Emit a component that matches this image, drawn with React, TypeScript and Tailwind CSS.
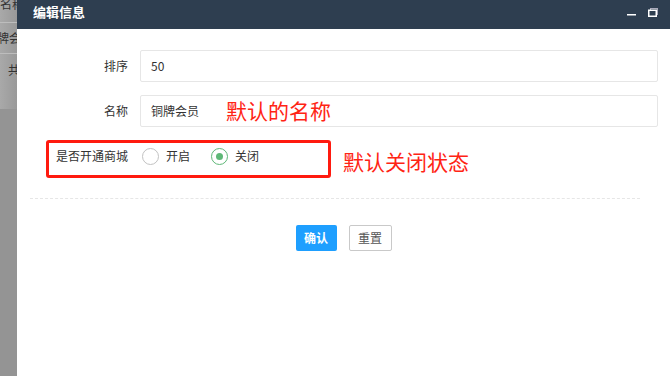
import React from 'react';

const font = { fontFamily: '"Noto Sans CJK SC", "Noto Sans", sans-serif' };

const Radio: React.FC<{ checked?: boolean; label: string }> = ({ checked, label }) => (
  <div className="flex items-center">
    <span
      className={`flex h-[17px] w-[17px] items-center justify-center rounded-full border ${
        checked ? 'border-[#5fb878]' : 'border-[#c2c2c2]'
      }`}
    >
      {checked && <span className="h-[7px] w-[7px] rounded-full bg-[#5fb878]" />}
    </span>
    <span className="ml-[7px] text-[12px] text-[#333]">{label}</span>
  </div>
);

export default function App() {
  return (
    <div className="flex h-[376px] w-[670px] overflow-hidden bg-white" style={font}>
      {/* dimmed page behind the dialog */}
      <div className="relative w-[17px] shrink-0 overflow-hidden bg-gradient-to-r from-[#a9a9a9] to-[#999]">
        <div className="absolute left-0 top-[-5px] whitespace-nowrap text-[12px] text-[#333]">名称</div>
        <div className="absolute left-0 top-[22px] h-px w-full bg-[#bdbdbd]" />
        <div className="absolute left-[-3px] top-[29px] whitespace-nowrap text-[12px] text-[#333]">牌会</div>
        <div className="absolute left-0 top-[53px] h-px w-full bg-[#bdbdbd]" />
        <div className="absolute left-[8px] top-[61px] text-[12px] text-[#333]">共</div>
        <div className="absolute left-0 top-[109px] h-[267px] w-full bg-[#949494]" />
      </div>

      <div className="flex flex-1 flex-col">
        <div className="flex h-[29px] items-start justify-between bg-[#2e3e50] pl-[16px] pr-[12px] pt-[2px]">
          <span className="text-[13px] font-bold text-white">编辑信息</span>
          <div className="flex items-center gap-[12px] pt-[6px]">
            <svg width="9" height="6" viewBox="0 0 9 6">
              <rect x="0" y="4" width="9" height="1.5" fill="#fff" />
            </svg>
            <svg width="10" height="9" viewBox="0 0 10 9">
              <rect x="2.5" y="0.5" width="7" height="6" fill="none" stroke="#aab" />
              <rect x="0.75" y="2.25" width="7.5" height="6" fill="#2e3e50" stroke="#fff" strokeWidth="1.5" />
            </svg>
          </div>
        </div>

        <div className="flex flex-col pt-[21px] text-[12px] text-[#333]">
          <div className="flex h-[32px] items-center">
            <label className="w-[111px] text-right">排序</label>
            <div className="ml-[12px] flex h-[32px] w-[518px] items-center rounded-[2px] border border-[#e6e6e6] pl-[10px]">50</div>
          </div>

          <div className="relative mt-[13px] flex h-[32px] items-center">
            <label className="w-[111px] text-right">名称</label>
            <div className="ml-[12px] flex h-[32px] w-[518px] items-center rounded-[2px] border border-[#e6e6e6] pl-[10px]">铜牌会员</div>
            <span className="absolute left-[209px] top-[1px] text-[21px] leading-[28px] text-[#ff2414]">默认的名称</span>
          </div>

          <div className="relative mt-[13px] flex h-[32px] items-center">
            <label className="w-[111px] text-right">是否开通商城</label>
            <div className="ml-[14px] flex items-center gap-[21px]">
              <Radio label="开启" />
              <Radio checked label="关闭" />
            </div>
            <div className="absolute left-[29px] top-0 h-[38px] w-[285px] rounded-[3px] border-[3px] border-[#ff1a0f]" />
            <span className="absolute left-[326px] top-[7px] text-[21px] leading-[28px] text-[#ff2414]">默认关闭状态</span>
          </div>

          <div className="ml-[13px] mt-[26px] w-[610px] border-t border-dashed border-[#e6e6e6]" />

          <div className="mt-[26px] flex justify-center gap-[12px]">
            <button className="h-[26px] w-[41px] rounded-[2px] bg-[#1e9fff] text-[12px] font-bold text-white">确认</button>
            <button className="h-[26px] w-[43px] rounded-[2px] border border-[#c9c9c9] bg-white text-[12px] text-[#555]">重置</button>
          </div>
        </div>
      </div>
    </div>
  );
}
